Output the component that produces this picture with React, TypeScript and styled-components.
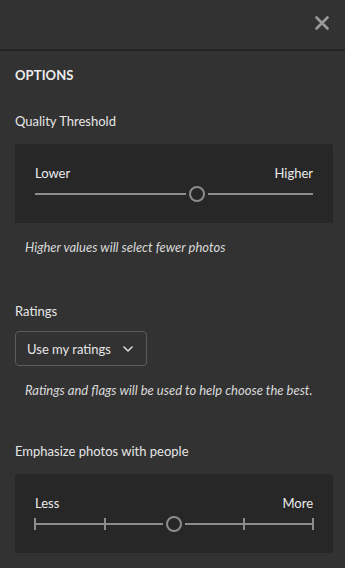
import styled, { createGlobalStyle } from 'styled-components';

const GlobalStyle = createGlobalStyle`
  html, body {
    margin: 0;
    padding: 0;
    background: #323232;
  }
  * {
    box-sizing: border-box;
  }
`;

interface SliderProps {
  lowLabel: string;
  highLabel: string;
  value: number;
  ticks?: number[];
}

const Slider: React.FC<SliderProps> = ({ lowLabel, highLabel, value, ticks }) => {
  return (
    <Panel>
      <LabelsRow>
        <RangeLabel>{lowLabel}</RangeLabel>
        <RangeLabel>{highLabel}</RangeLabel>
      </LabelsRow>
      <Track>
        {ticks &&
          ticks.map((tick) => <Tick key={tick} style={{ left: `${tick}%` }} />)}
        <Thumb style={{ left: `${value}%` }} />
      </Track>
    </Panel>
  );
};

export default function App() {
  return (
    <Page>
      <GlobalStyle />
      <Header>
        <CloseButton aria-label="Close">
          <svg width="14" height="14" viewBox="0 0 14 14">
            <path d="M1.5 1.5 L12.5 12.5 M12.5 1.5 L1.5 12.5" stroke="#9a9a9a" strokeWidth="2.6" strokeLinecap="round" />
          </svg>
        </CloseButton>
      </Header>
      <Content>
        <SectionTitle>OPTIONS</SectionTitle>

        <FieldLabel $top={28}>Quality Threshold</FieldLabel>
        <Slider lowLabel="Lower" highLabel="Higher" value={58.3} />
        <Hint>Higher values will select fewer photos</Hint>

        <FieldLabel $top={46}>Ratings</FieldLabel>
        <Dropdown>
          <span>Use my ratings</span>
          <svg width="10" height="6" viewBox="0 0 10 6">
            <path d="M1 1 L5 5 L9 1" stroke="#d8d8d8" strokeWidth="1.6" fill="none" strokeLinecap="round" strokeLinejoin="round" />
          </svg>
        </Dropdown>
        <Hint>Ratings and flags will be used to help choose the best.</Hint>

        <FieldLabel $top={43}>Emphasize photos with people</FieldLabel>
        <Slider lowLabel="Less" highLabel="More" value={50} ticks={[0, 25, 75, 100]} />
      </Content>
    </Page>
  );
}

const Page = styled.div`
  width: 345px;
  height: 568px;
  background: #323232;
  font-family: Lato, 'Open Sans', sans-serif;
  color: #e6e6e6;
  overflow: hidden;
`;

const Header = styled.div`
  height: 51px;
  border-bottom: 2px solid #232323;
  display: flex;
  justify-content: flex-end;
  align-items: flex-start;
  padding: 16px 16px 0 0;
`;

const CloseButton = styled.button`
  width: 14px;
  height: 14px;
  padding: 0;
  border: none;
  background: none;
  display: flex;
  cursor: pointer;
`;

const Content = styled.div`
  padding: 0 12px 0 15px;
  display: flex;
  flex-direction: column;
  align-items: stretch;
`;

const SectionTitle = styled.div`
  margin-top: 15px;
  font-size: 13px;
  line-height: 18px;
  font-weight: 700;
  letter-spacing: 0.1px;
  color: #ececec;
`;

const FieldLabel = styled.div<{ $top?: number }>`
  margin-top: ${(props) => props.$top ?? 26}px;
  font-size: 13px;
  line-height: 18px;
  color: #e6e6e6;
`;

const Panel = styled.div`
  margin-top: 14px;
  height: 79px;
  background: #272727;
  border-radius: 2px;
  padding: 20px 20px 0 20px;
  display: flex;
  flex-direction: column;
`;

const LabelsRow = styled.div`
  display: flex;
  justify-content: space-between;
  font-size: 13px;
  line-height: 18px;
`;

const RangeLabel = styled.span`
  color: #ececec;
`;

const Track = styled.div`
  position: relative;
  margin-top: 11px;
  height: 2px;
  background: #8c8c8c;
`;

const Tick = styled.div`
  position: absolute;
  top: -5px;
  width: 2px;
  height: 12px;
  margin-left: -1px;
  background: #8c8c8c;
`;

const Thumb = styled.div`
  position: absolute;
  top: -7px;
  width: 16px;
  height: 16px;
  margin-left: -8px;
  border-radius: 50%;
  border: 2px solid #8c8c8c;
  background: #272727;
  box-shadow: 0 0 0 3px #272727;
`;

const Hint = styled.div`
  margin-top: 15px;
  padding-left: 10px;
  font-size: 13px;
  line-height: 18px;
  font-style: italic;
  color: #dadada;
`;

const Dropdown = styled.button`
  margin-top: 11px;
  align-self: flex-start;
  width: 132px;
  height: 35px;
  padding: 0 13px 0 11px;
  display: flex;
  align-items: center;
  justify-content: space-between;
  background: transparent;
  border: 1px solid #5c5c5c;
  border-radius: 4px;
  font-family: inherit;
  font-size: 13px;
  color: #e6e6e6;
  cursor: pointer;
`;
